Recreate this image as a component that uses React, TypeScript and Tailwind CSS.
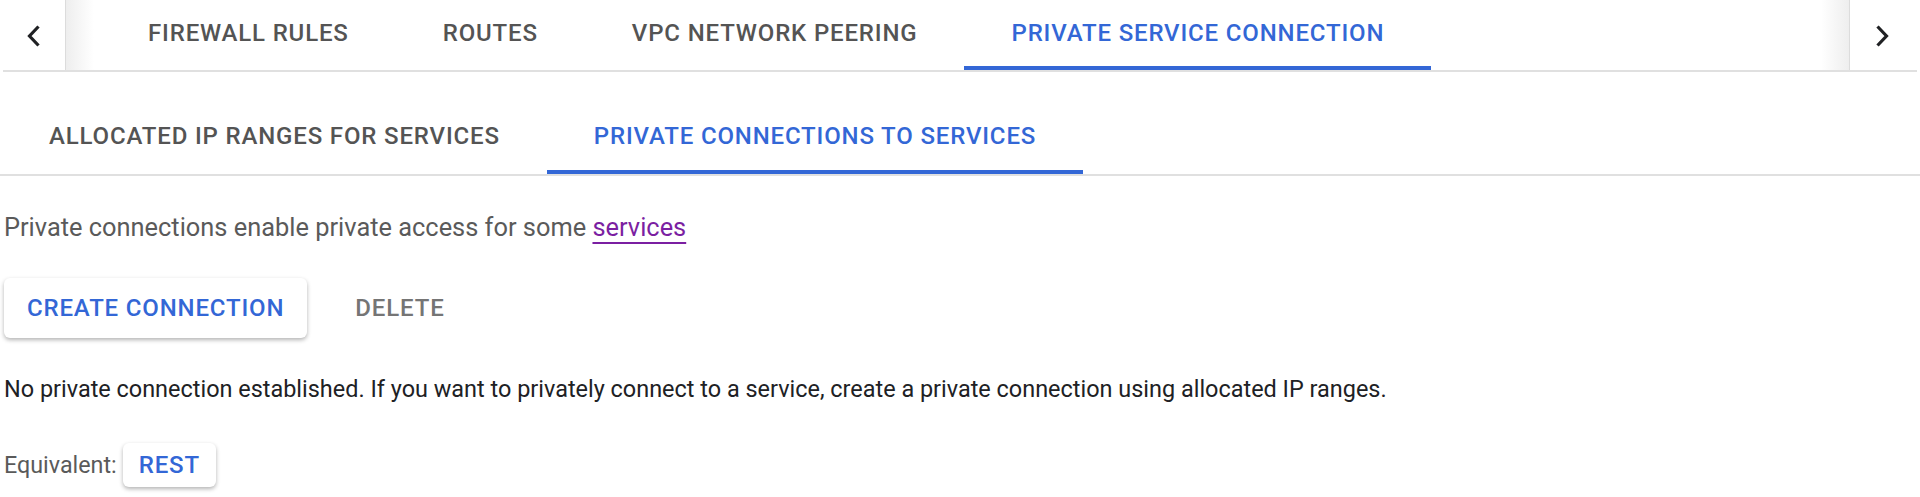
const font = { fontFamily: "Roboto, 'Liberation Sans', sans-serif" };

const topTabs = [
  { label: "FIREWALL RULES" },
  { label: "ROUTES" },
  { label: "VPC NETWORK PEERING" },
  { label: "PRIVATE SERVICE CONNECTION", active: true },
];

const subTabs = [
  { label: "ALLOCATED IP RANGES FOR SERVICES" },
  { label: "PRIVATE CONNECTIONS TO SERVICES", active: true },
];

function Chevron({ dir }: { dir: "left" | "right" }) {
  return (
    <svg width="22" height="26" viewBox="0 0 22 26" fill="none">
      <path
        d={dir === "left" ? "M15.5 3.5 L6.5 13 L15.5 22.5" : "M6.5 3.5 L15.5 13 L6.5 22.5"}
        stroke="#202124"
        strokeWidth="3.2"
      />
    </svg>
  );
}

function Tab({ label, active }: { label: string; active?: boolean }) {
  return (
    <div
      className={`flex h-full items-center px-[47px] border-b-[4px] text-[24px] font-medium tracking-[0.035em] ${
        active
          ? "border-[#3367d6] text-[#3367d6]"
          : "border-transparent text-[#545454]"
      }`}
    >
      {label}
    </div>
  );
}

export default function App() {
  return (
    <div className="w-[1920px] h-[497px] bg-white overflow-hidden" style={font}>
      {/* Top tab bar with scroll arrows */}
      <div className="flex h-[72px] border-b-2 border-[#e0e0e0] mx-[3px]">
        <div className="flex w-[63px] items-center justify-center pt-[2px] border-r border-[#dcdcdc]">
          <Chevron dir="left" />
        </div>
        <div className="w-[28px] bg-gradient-to-r from-[#eeeeee] to-white" />
        <div className="flex flex-1 items-stretch pl-[7px]">
          {topTabs.map((t) => (
            <Tab key={t.label} label={t.label} active={t.active} />
          ))}
        </div>
        <div className="w-[28px] bg-gradient-to-l from-[#eeeeee] to-white" />
        <div className="flex w-[68px] items-center justify-center pt-[2px] pr-[3px] border-l border-[#dcdcdc]">
          <Chevron dir="right" />
        </div>
      </div>

      {/* Sub tabs */}
      <div className="mt-[30px] flex h-[74px] border-b-2 border-[#e0e0e0]">
        <div className="flex h-full items-stretch pl-[2px]">
          {subTabs.map((t) => (
            <Tab key={t.label} label={t.label} active={t.active} />
          ))}
        </div>
      </div>

      <div className="px-[4px]">
        <p className="mt-[37px] text-[25.4px] leading-[28px] text-[#5a5a5a]">
          Private connections enable private access for some{" "}
          <a className="text-[#7b1fa2] underline underline-offset-[6px] decoration-[2px]">
            services
          </a>
        </p>

        <div className="mt-[37px] flex items-center gap-[24px]">
          <button className="h-[60px] rounded-[6px] bg-white px-[23px] text-[24px] font-medium tracking-[0.035em] text-[#3367d6] shadow-[0_2px_4px_rgba(0,0,0,0.3)]">
            CREATE CONNECTION
          </button>
          <button className="h-[60px] px-[24px] text-[24px] font-medium tracking-[0.035em] text-[#757575]">
            DELETE
          </button>
        </div>

        <p className="mt-[37px] text-[23.45px] leading-[28px] text-[#202124]">
          No private connection established. If you want to privately connect to a service, create a private connection using allocated IP ranges.
        </p>

        <div className="mt-[40px] flex items-center gap-[6px]">
          <span className="text-[23.3px] text-[#5a5a5a]">Equivalent:</span>
          <button className="h-[44px] rounded-[6px] bg-white px-[16px] text-[24px] font-medium tracking-[0.035em] text-[#3367d6] shadow-[0_2px_4px_rgba(0,0,0,0.3)]">
            REST
          </button>
        </div>
      </div>
    </div>
  );
}
